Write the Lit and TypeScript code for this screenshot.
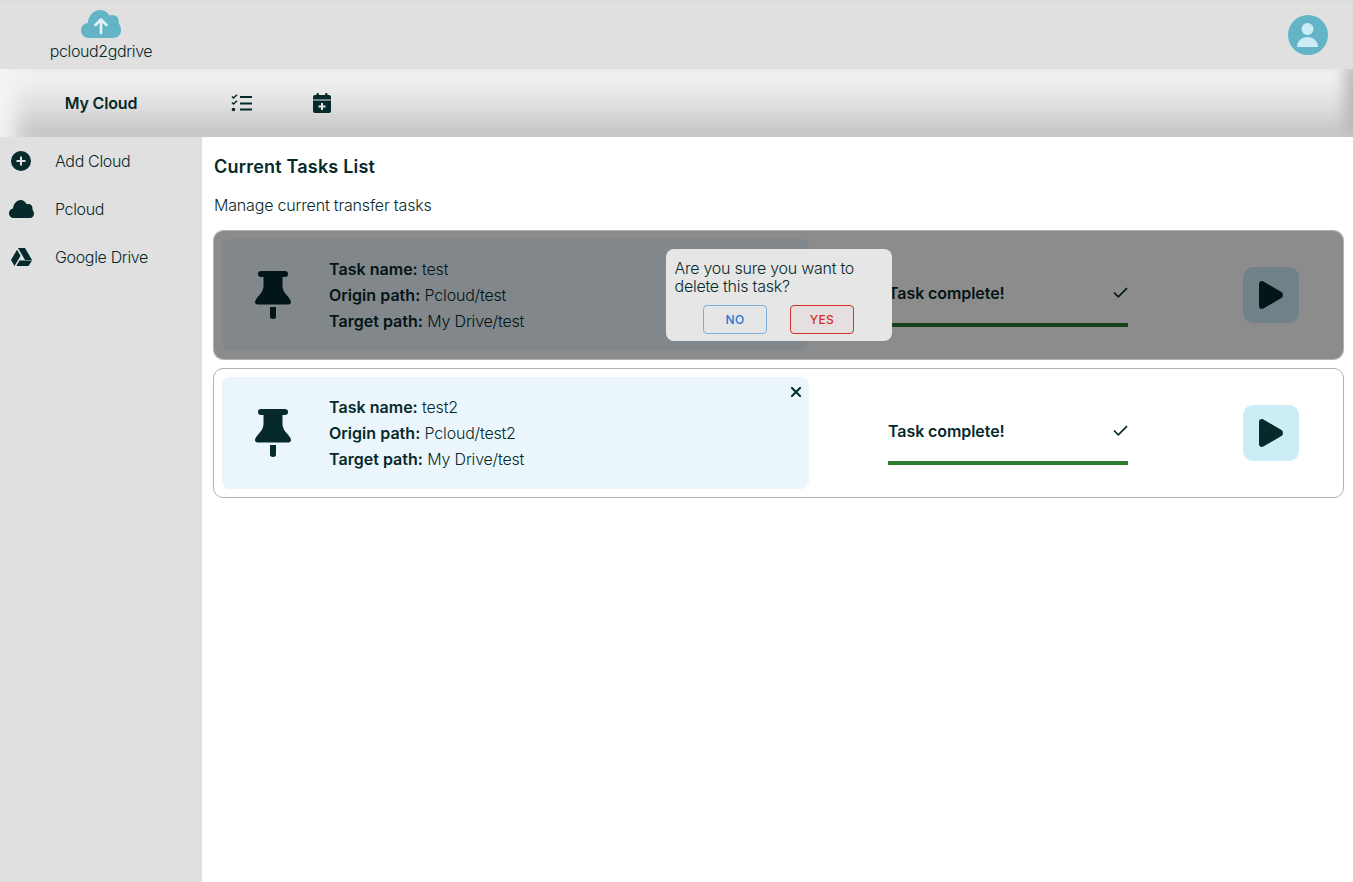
import { LitElement, html, css } from 'lit';
import { customElement } from 'lit/decorators.js';

const tasks = [
  { name: 'test', origin: 'Pcloud/test', target: 'My Drive/test', confirm: true },
  { name: 'test2', origin: 'Pcloud/test2', target: 'My Drive/test', confirm: false },
];

@customElement('app-root')
export class AppRoot extends LitElement {
  static styles = css`
    :host {
      display: block;
      height: 882px;
      overflow: hidden;
      font-family: Inter, "Liberation Sans", sans-serif;
      font-size: 16px;
      color: #06292b;
      background: #fff;
    }
    svg { display: block; flex: none; }
    .top {
      height: 68px;
      border-top: 1px solid #d6dce1;
      background: #e0e0e0;
      display: flex;
      align-items: center;
      justify-content: space-between;
    }
    .logo {
      width: 202px;
      display: flex;
      flex-direction: column;
      align-items: center;
      font-size: 16px;
      line-height: 20px;
      font-weight: 300;
      letter-spacing: -0.38px;
      padding-top: 3px;
    }
    .logo svg { margin-bottom: 3px; margin-top: -2px; }
    .avatar { margin-right: 25px; }
    .tabs {
      height: 68px;
      display: flex;
      align-items: center;
      background: linear-gradient(180deg, #f4f4f4 0%, #ececec 25%, #dcdcdc 60%, #c0c0c0 100%);
      box-shadow: inset 24px 0 20px -8px #f4f4f4, inset -14px 0 14px -6px #b8b8b8;
    }
    .tabs .title { width: 202px; text-align: center; font-weight: 600; letter-spacing: -0.18px; }
    .tabs .list { margin-left: 29px; }
    .tabs .cal { margin-left: 61px; }
    .main { display: flex; height: 745px; }
    .side {
      width: 202px;
      flex: none;
      background: #e0e0e0;
    }
    .side .row {
      height: 48px;
      display: flex;
      align-items: center;
      padding-left: 55px;
      position: relative;
      font-weight: 300;
      letter-spacing: -0.34px;
    }
    .side .row svg { position: absolute; }
    .content { flex: 1; padding: 0 9px 0 12px; min-width: 0; }
    h1 {
      margin: 19px 0 0;
      font-size: 18px;
      line-height: 22px;
      font-weight: 600;
      letter-spacing: 0.2px;
    }
    .sub { margin: 16px 0 14px; line-height: 22px; font-weight: 300; letter-spacing: -0.18px; }
    .card {
      position: relative;
      box-sizing: border-box;
      height: 130px;
      margin: 0 0 8px -1px;
      padding: 8px;
      border: 1px solid #b2b2b2;
      border-radius: 10px;
      display: flex;
      align-items: center;
    }
    .info {
      position: relative;
      box-sizing: border-box;
      width: 587px;
      height: 112px;
      flex: none;
      background: #ebf6fc;
      border-radius: 8px;
      display: flex;
      align-items: center;
      padding-left: 33px;
    }
    .lines { margin-left: 38px; line-height: 26px; font-weight: 300; letter-spacing: -0.2px; }
    .lines b { font-weight: 600; letter-spacing: 0.03px; }
    .close { position: absolute; top: 10px; right: 8px; }
    .status { width: 240px; margin-left: 79px; padding-top: 18px; flex: none; }
    .status .head {
      display: flex;
      justify-content: space-between;
      align-items: center;
      font-weight: 600;
      height: 22px;
      margin-bottom: 19px;
      letter-spacing: -0.08px;
    }
    .status .bar { height: 4px; background: #2e7d32; }
    .play {
      width: 56px;
      height: 56px;
      margin-left: 115px;
      flex: none;
      border-radius: 10px;
      background: #ccecf6;
      display: flex;
      align-items: center;
      justify-content: center;
    }
    .overlay {
      position: absolute;
      inset: 0;
      border-radius: 9px;
      background: rgba(0, 0, 0, 0.45);
      display: flex;
      align-items: center;
      justify-content: center;
    }
    .dialog {
      box-sizing: border-box;
      width: 226px;
      height: 92px;
      padding: 10px 9px 0;
      background: #e6e6e6;
      border-radius: 8px;
      line-height: 18px;
      font-weight: 300;
      letter-spacing: -0.25px;
    }
    .actions { display: flex; justify-content: center; gap: 23px; margin-top: 10px; }
    .btn {
      box-sizing: border-box;
      width: 64px;
      height: 29px;
      border-radius: 4px;
      display: flex;
      align-items: center;
      justify-content: center;
      font-size: 12px;
      font-weight: 500;
      letter-spacing: 0.4px;
    }
    .no { color: #1976d2; border: 1px solid rgba(25, 118, 210, 0.5); }
    .yes { color: #d32f2f; border: 1px solid #d32f2f; background: rgba(211, 47, 47, 0.04); }
  `;

  private logoIcon() {
    return html`<svg width="40" height="28" viewBox="0 0 40 28">
      <path fill="#62b4c6" d="M8 28C3.500 28 0 24.800 0 20.500 0 16.500 3 13.300 6.800 13 7.500 5.500 12.800 0 19 0c4 0 7.500 2.200 9.300 5.500 1-.4 2-.6 3-.6 3.700 0 6.500 2.800 6.500 6.500 0 .6-.1 1.200-.2 1.800C39 14.500 40 17.500 40 20.500 40 24.800 36.500 28 32 28z"/>
      <path fill="none" stroke="#e4f3f6" stroke-width="2.600" stroke-linecap="round" stroke-linejoin="round" d="M20 23V10M14.500 15 20 9.500 25.500 15"/>
    </svg>`;
  }

  private pin() {
    return html`<svg width="36" height="48" viewBox="0 0 36 48" fill="currentColor">
      <rect x="3" y="0" width="30" height="6" rx="3"/>
      <path d="M8.500 5h19v9c0 5 1.500 7 4.500 10.500 2.500 3 4 5 4 6.500 0 1.500-1 2.500-2.500 2.500h-31C1 33.500 0 32.500 0 31c0-1.500 1.500-3.500 4-6.500C7 21 8.500 19 8.500 14z"/>
      <path d="M15 36h6v10c0 1.200-1.300 2-3 2s-3-.8-3-2z"/>
    </svg>`;
  }

  private card(t: (typeof tasks)[number]) {
    return html`<div class="card">
      <div class="info">
        ${this.pin()}
        <div class="lines">
          <div><b>Task name:</b> ${t.name}</div>
          <div><b>Origin path:</b> ${t.origin}</div>
          <div><b>Target path:</b> ${t.target}</div>
        </div>
        <svg class="close" width="10" height="10" viewBox="0 0 10 10">
          <path d="M1 1l8 8M9 1l-8 8" stroke="currentColor" stroke-width="2" stroke-linecap="square"/>
        </svg>
      </div>
      <div class="status">
        <div class="head">
          <span>Task complete!</span>
          <svg width="15" height="11" viewBox="0 0 15 11">
            <path d="M1 5.500l4.300 4.300L14 1.200" fill="none" stroke="currentColor" stroke-width="1.700"/>
          </svg>
        </div>
        <div class="bar"></div>
      </div>
      <div class="play">
        <svg width="24" height="28" viewBox="0 0 24 28" fill="currentColor">
          <path d="M0 3C0 .6 2.400-.7 4.400.5l18 10.500c2 1.200 2 4.800 0 6l-18 10.500C2.400 28.700 0 27.400 0 25z"/>
        </svg>
      </div>
      ${t.confirm
        ? html`<div class="overlay">
            <div class="dialog">
              Are you sure you want to delete this task?
              <div class="actions">
                <div class="btn no">NO</div>
                <div class="btn yes">YES</div>
              </div>
            </div>
          </div>`
        : ''}
    </div>`;
  }

  render() {
    return html`
      <div class="top">
        <div class="logo">
          ${this.logoIcon()}
          <span>pcloud2gdrive</span>
        </div>
        <svg class="avatar" width="40" height="40" viewBox="0 0 40 40">
          <circle cx="20" cy="20" r="20" fill="#62b4c6"/>
          <circle cx="19.500" cy="14" r="6" fill="#cbecf6"/>
          <path fill="#cbecf6" d="M9 32c0-6 4.800-10 10.500-10S30 26 30 32z"/>
        </svg>
      </div>
      <div class="tabs">
        <div class="title">My Cloud</div>
        <svg class="list" width="21" height="18" viewBox="0 0 21 18" fill="none" stroke="currentColor">
          <path stroke-width="1.500" d="M1 2.500l1.500 1.500L6 .8M1 8.500L2.500 10 6 6.800"/>
          <circle cx="2.500" cy="15.500" r="1.800" fill="currentColor" stroke="none"/>
          <path stroke-width="2.200" d="M9 3h12M9 9.500h12M9 15.500h12"/>
        </svg>
        <svg class="cal" width="18" height="20" viewBox="0 0 18 20" fill="currentColor">
          <rect x="3.500" y="0" width="2.400" height="4" rx="1"/>
          <rect x="12.100" y="0" width="2.400" height="4" rx="1"/>
          <path d="M2 2h14a2 2 0 0 1 2 2v2.500H0V4a2 2 0 0 1 2-2z"/>
          <path d="M0 7.500h18V18a2 2 0 0 1-2 2H2a2 2 0 0 1-2-2z"/>
          <path d="M9 10v7M5.500 13.500h7" stroke="#e2e2e2" stroke-width="2"/>
        </svg>
      </div>
      <div class="main">
        <div class="side">
          <div class="row">
            <svg style="left:11px" width="20" height="20" viewBox="0 0 20 20">
              <circle cx="10" cy="10" r="10" fill="currentColor"/>
              <path d="M10 5.500v9M5.500 10h9" stroke="#e0e0e0" stroke-width="2"/>
            </svg>
            Add Cloud
          </div>
          <div class="row">
            <svg style="left:9px" width="25" height="18" viewBox="0 0 25 18">
              <path fill="currentColor" d="M5 18C2.200 18 0 15.900 0 13.200 0 10.800 1.700 8.800 4 8.400 4.600 3.600 7.700 0 11.500 0c2.700 0 5 1.700 6.200 4.300.6-.3 1.300-.4 1.900-.4 2.200 0 3.900 1.900 3.900 4.200 0 .4 0 .8-.1 1.200C24 10.300 25 12 25 14c0 2.300-1.800 4-4 4z"/>
            </svg>
            Pcloud
          </div>
          <div class="row">
            <svg style="left:11px" width="21" height="18" viewBox="0 0 21 18" fill="currentColor">
              <path d="M7 0h7l7 12h-7z"/>
              <path d="M6 1.800 9.500 7.800 3.500 18 0 12z"/>
              <path d="M8.500 12.500H21L17.500 18H5.300z"/>
            </svg>
            Google Drive
          </div>
        </div>
        <div class="content">
          <h1>Current Tasks List</h1>
          <p class="sub">Manage current transfer tasks</p>
          ${tasks.map((t) => this.card(t))}
        </div>
      </div>
    `;
  }
}
